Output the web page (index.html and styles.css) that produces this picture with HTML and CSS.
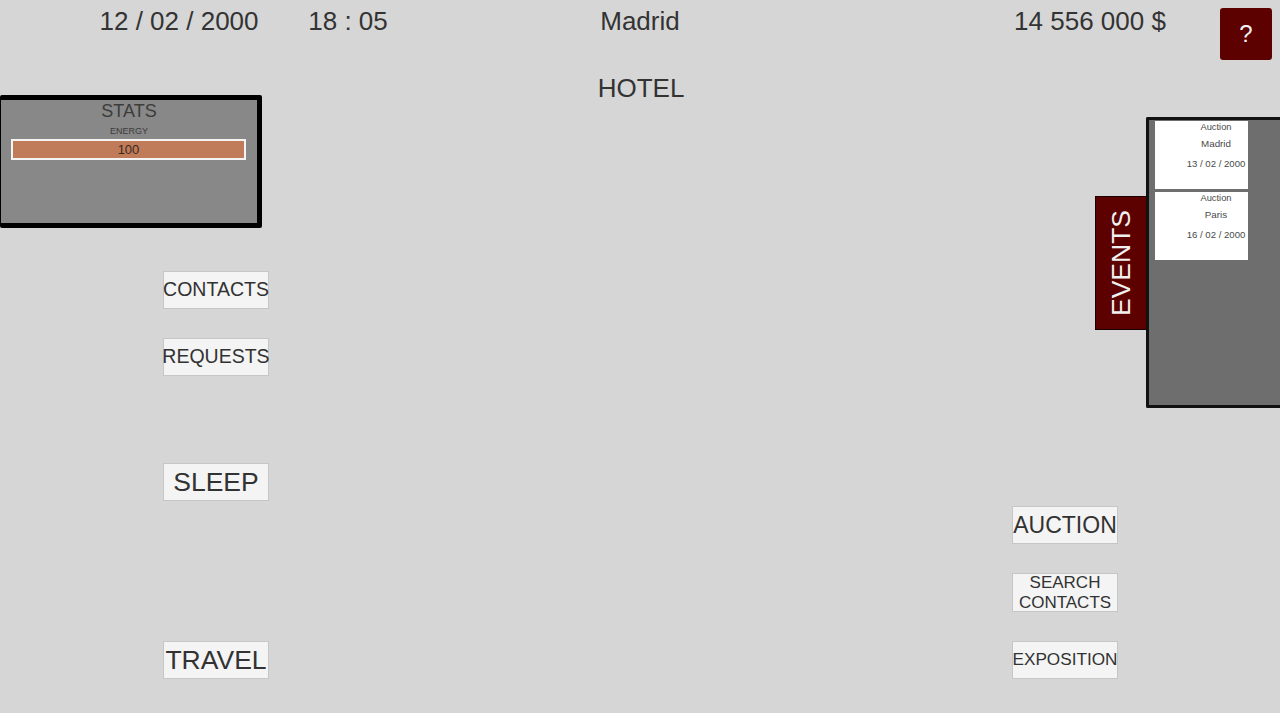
FILE: index.html
```html
<!DOCTYPE html>
<html>
<head>
<meta charset="utf-8">
<link rel="stylesheet" href="styles.css">
</head>
<body>
<div class="hud">
  <header class="topbar">
    <div class="date">12 / 02 / 2000</div>
    <div class="time">18 : 05</div>
    <div class="city">Madrid</div>
    <div class="money">14 556 000 $</div>
    <button class="help">?</button>
  </header>
  <main class="stage">
    <section class="col-left">
      <div class="stats">
        <div class="stats-title">STATS</div>
        <div class="stats-label">ENERGY</div>
        <div class="bar"><span>100</span></div>
      </div>
      <div class="btn btn-contacts">CONTACTS</div>
      <div class="btn btn-requests">REQUESTS</div>
      <div class="btn btn-sleep">SLEEP</div>
      <div class="btn btn-travel">TRAVEL</div>
    </section>
    <section class="col-center">
      <div class="place">HOTEL</div>
    </section>
    <section class="col-right">
      <div class="btn btn-auction">AUCTION</div>
      <div class="btn btn-search">SEARCH<br>CONTACTS</div>
      <div class="btn btn-expo">EXPOSITION</div>
    </section>
    <aside class="events">
      <div class="events-tab"><span>EVENTS</span></div>
      <div class="events-panel">
        <div class="card">
          <div class="c1">Auction</div>
          <div class="c2">Madrid</div>
          <div class="c3">13 / 02 / 2000</div>
        </div>
        <div class="card">
          <div class="c1">Auction</div>
          <div class="c2">Paris</div>
          <div class="c3">16 / 02 / 2000</div>
        </div>
      </div>
    </aside>
  </main>
</div>
</body>
</html>
```
FILE: styles.css
```css
* { box-sizing: border-box; }
html, body { margin: 0; padding: 0; }
body {
  background: #d6d6d6;
  font-family: "Liberation Sans", Arial, sans-serif;
  color: #333;
  width: 1280px;
  height: 713px;
  overflow: hidden;
}
.hud { width: 1280px; height: 713px; display: flex; flex-direction: column; }

.topbar {
  height: 42px;
  display: flex;
  align-items: flex-start;
  font-size: 26px;
  color: #333;
}
.topbar > div { line-height: 42px; text-align: center; white-space: nowrap; }
.date { margin-left: 80px; width: 198px; }
.time { margin-left: 20px; width: 100px; }
.city { margin-left: 142px; width: 200px; }
.money { margin-left: 250px; width: 200px; }
.help {
  margin-left: 30px;
  margin-top: 8px;
  width: 52px;
  height: 52px;
  background: #5c0000;
  border: none;
  border-radius: 3px;
  color: #f2f2f2;
  font-family: "Liberation Sans", Arial, sans-serif;
  font-size: 24px;
  padding: 0;
  line-height: 52px;
}

.stage { position: relative; flex: 1; display: flex; }

.col-left { width: 270px; display: flex; flex-direction: column; align-items: flex-start; }
.stats {
  margin-top: 53px;
  width: 262px;
  height: 133px;
  background: #888888;
  border: 5px solid #000;
  border-left-width: 1px;
  border-radius: 2px;
  display: flex;
  flex-direction: column;
  align-items: center;
}
.stats-title { font-size: 18px; color: #3c3c3c; line-height: 22px; margin-top: 0; }
.stats-label { font-size: 9px; color: #3c3c3c; line-height: 11px; margin-top: 4px; }
.bar {
  margin-top: 2px;
  margin-left: 10px;
  align-self: flex-start;
  width: 235px;
  height: 21px;
  border: 2px solid #f4f4f4;
  background: #c07b59;
  display: flex;
  align-items: center;
  justify-content: center;
  font-size: 13px;
  color: #3a2a22;
}

.btn {
  width: 106px;
  height: 38px;
  background: #f4f4f4;
  border: 1px solid #c6c6c6;
  display: flex;
  align-items: center;
  justify-content: center;
  text-align: center;
  white-space: nowrap;
  color: #323232;
  line-height: 1;
}
.col-left .btn { margin-left: 163px; }
.btn-contacts { margin-top: 43px; font-size: 19.5px; }
.btn-requests { margin-top: 29px; font-size: 19.5px; }
.btn-sleep { margin-top: 87px; font-size: 26.5px; }
.btn-travel { margin-top: 140px; font-size: 26.5px; }

.col-center { flex: 1; display: flex; justify-content: center; }
.place { margin-top: 31px; font-size: 26px; line-height: 30px; color: #333; }

.col-right { width: 268px; display: flex; flex-direction: column; }
.btn-auction { margin-top: 464px; font-size: 23px; }
.btn-search { margin-top: 29px; height: 39px; font-size: 17px; line-height: 20px; }
.btn-expo { margin-top: 29px; font-size: 17.2px; }

.events {
  position: absolute;
  top: 75px;
  right: 0;
  display: flex;
  align-items: flex-start;
}
.events-tab {
  margin-top: 79px;
  width: 52px;
  height: 134px;
  background: #5c0000;
  border: 1px solid #1a0000;
  display: flex;
  align-items: center;
  justify-content: center;
  margin-right: -1px;
}
.events-tab span {
  writing-mode: vertical-rl;
  transform: rotate(180deg);
  color: #f0f0f0;
  font-size: 26.5px;
  line-height: 1;
}
.events-panel {
  width: 134px;
  height: 291px;
  background: #6e6e6e;
  border: 3px solid #111;
  border-right: none;
  border-radius: 2px 0 0 2px;
  padding: 1px 0 0 6px;
  display: flex;
  flex-direction: column;
  gap: 3px;
}
.card {
  width: 93px;
  height: 68px;
  background: #fff;
  display: flex;
  flex-direction: column;
  align-items: flex-start;
  color: #4a4a4a;
}
.card > div { width: 122px; text-align: center; white-space: nowrap; }
.c1 { font-size: 9.3px; line-height: 12px; margin-top: 0px; }
.c2 { font-size: 9.8px; line-height: 12px; margin-top: 5px; }
.c3 { font-size: 9.6px; line-height: 12px; margin-top: 8px; }
```
